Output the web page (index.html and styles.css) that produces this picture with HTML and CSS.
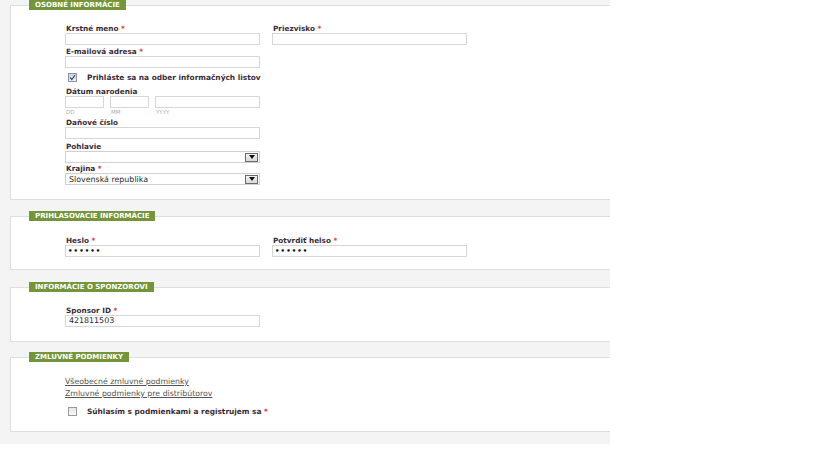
FILE: index.html
```html
<!DOCTYPE html>
<html lang="sk">
<head>
<meta charset="utf-8">
<title>Registrácia</title>
<link rel="stylesheet" href="styles.css">
</head>
<body>
<div class="page">
  <section class="panel p1">
    <div class="panel-title">Osobné informácie</div>
    <div class="form">
      <div class="row">
        <div class="field">
          <label class="lbl">Krstné meno <span class="req">*</span></label>
          <div class="input"></div>
        </div>
        <div class="field">
          <label class="lbl">Priezvisko <span class="req">*</span></label>
          <div class="input"></div>
        </div>
      </div>
      <div class="field f-gap2">
        <label class="lbl">E-mailová adresa <span class="req">*</span></label>
        <div class="input"></div>
      </div>
      <div class="check-row cr1">
        <span class="cb checked"><svg viewBox="0 0 9 9" width="9" height="9"><path d="M2 4.5 L3.8 6.5 L7 2.2" fill="none" stroke="#3d4f7a" stroke-width="1.2"/></svg></span>
        <span class="check-text">Prihláste sa na odber informačných listov</span>
      </div>
      <div class="field f-gap5">
        <label class="lbl">Dátum narodenia</label>
        <div class="date-row">
          <div class="date-part dd"><div class="input"></div><span class="sub">DD</span></div>
          <div class="date-part mm"><div class="input"></div><span class="sub">MM</span></div>
          <div class="date-part yy"><div class="input"></div><span class="sub">YYYY</span></div>
        </div>
      </div>
      <div class="field f-gap3">
        <label class="lbl">Daňové číslo</label>
        <div class="input"></div>
      </div>
      <div class="field f-gap3">
        <label class="lbl">Pohlavie</label>
        <div class="select"><span class="sel-text"></span><span class="sel-btn"><span class="tri"></span></span></div>
      </div>
      <div class="field f-gap1">
        <label class="lbl">Krajina <span class="req">*</span></label>
        <div class="select"><span class="sel-text">Slovenská republika</span><span class="sel-btn"><span class="tri"></span></span></div>
      </div>
    </div>
  </section>

  <section class="panel p2">
    <div class="panel-title">Prihlasovacie informácie</div>
    <div class="form">
      <div class="row">
        <div class="field">
          <label class="lbl">Heslo <span class="req">*</span></label>
          <div class="input pw">••••••</div>
        </div>
        <div class="field">
          <label class="lbl">Potvrdiť helso <span class="req">*</span></label>
          <div class="input pw">••••••</div>
        </div>
      </div>
    </div>
  </section>

  <section class="panel p3">
    <div class="panel-title">Informácie o sponzorovi</div>
    <div class="form">
      <div class="field">
        <label class="lbl">Sponsor ID <span class="req">*</span></label>
        <div class="input val">421811503</div>
      </div>
    </div>
  </section>

  <section class="panel p4">
    <div class="panel-title">Zmluvné podmienky</div>
    <div class="form">
      <a class="link" href="#">Všeobecné zmluvné podmienky</a>
      <a class="link" href="#">Zmluvné podmienky pre distribútorov</a>
      <div class="check-row cr2">
        <span class="cb"></span>
        <span class="check-text">Súhlasím s podmienkami a registrujem sa <span class="req">*</span></span>
      </div>
    </div>
  </section>
</div>
</body>
</html>
```
FILE: styles.css
```css
html, body {
  margin: 0;
  padding: 0;
  background: #ffffff;
}
body {
  font-family: "DejaVu Sans", Verdana, sans-serif;
  color: #3a2b38;
}
.page {
  width: 610px;
  height: 444px;
  box-sizing: border-box;
  padding-top: 5px;
  background: #f4f4f4;
}
.panel {
  margin-left: 10px;
  background: #ffffff;
  border: 1px solid #dedede;
  border-right: none;
}
.p2 {
  margin-top: 16px;
}
.p3 {
  margin-top: 17px;
}
.p4 {
  margin-top: 15px;
}
.panel-title {
  width: fit-content;
  margin: -6px 0 0 18px;
  height: 10px;
  line-height: 10px;
  padding: 0 6px;
  background: #74953a;
  color: #ffffff;
  font-size: 7px;
  font-weight: bold;
  text-transform: uppercase;
}
.form {
  padding-left: 54px;
}
.p1 .form { padding-top: 14px; padding-bottom: 14px; }
.p2 .form { padding-top: 15px; padding-bottom: 12px; }
.p3 .form { padding-top: 14px; padding-bottom: 14px; }
.p4 .form { padding-top: 14px; padding-bottom: 15px; }

.row {
  display: flex;
  gap: 12px;
}
.field {
  display: flex;
  flex-direction: column;
  width: 195px;
}
.f-gap1 { margin-top: 1px; }
.f-gap2 { margin-top: 2px; }
.f-gap3 { margin-top: 3px; }
.f-gap5 { margin-top: 5px; }
.lbl {
  display: block;
  height: 9px;
  line-height: 10px;
  font-size: 7.3px;
  font-weight: bold;
  padding-left: 1px;
  white-space: nowrap;
}
.req {
  color: #d2353c;
}
.input {
  box-sizing: border-box;
  width: 195px;
  height: 12px;
  border: 1px solid #d6d6d6;
  background: #ffffff;
  font-size: 7.9px;
  line-height: 10px;
  padding-left: 3px;
  color: #222222;
}
.input.pw {
  font-weight: bold;
  font-size: 7px;
  letter-spacing: 1.1px;
  padding-left: 2px;
  color: #111111;
}
.input.val {
  color: #2a2a2a;
}
.check-row {
  display: flex;
  align-items: center;
  height: 10px;
  gap: 10px;
  padding-left: 3px;
}
.cr1 { margin-top: 4px; }
.cr2 { margin-top: 6px; }
.cb {
  display: block;
  box-sizing: border-box;
  width: 9px;
  height: 9px;
  border: 1px solid #9a9a9a;
  background: linear-gradient(#e6e6e6, #f8f8f8);
}
.cb svg {
  display: block;
  margin: -1px;
}
.cb.checked {
  border-color: #8c93a6;
  background: linear-gradient(#cdd5e6, #e9edf5);
}
.check-text {
  font-size: 7.4px;
  font-weight: bold;
  white-space: nowrap;
}
.date-row {
  display: flex;
  gap: 6px;
}
.date-part {
  display: flex;
  flex-direction: column;
}
.dd .input, .mm .input { width: 39px; }
.yy .input { width: 105px; }
.sub {
  height: 7px;
  line-height: 8px;
  font-size: 5.5px;
  color: #aaaaaa;
  padding-left: 1px;
}
.select {
  box-sizing: border-box;
  width: 195px;
  height: 12px;
  border: 1px solid #d0d0d0;
  display: flex;
  align-items: center;
  justify-content: space-between;
  padding: 0 1px 0 3px;
}
.sel-text {
  font-size: 7.9px;
  color: #2a2a2a;
  white-space: nowrap;
}
.sel-btn {
  box-sizing: border-box;
  width: 13px;
  height: 9px;
  border: 1px solid #6a6a6a;
  background: linear-gradient(#f4f4f4, #d9d9d9);
  display: flex;
  align-items: center;
  justify-content: center;
}
.tri {
  width: 0;
  height: 0;
  border-left: 3.5px solid transparent;
  border-right: 3.5px solid transparent;
  border-top: 4px solid #111111;
}
.link {
  display: block;
  height: 12px;
  line-height: 12px;
  font-size: 7.8px;
  color: #555555;
  text-decoration: underline;
  white-space: nowrap;
}
```
